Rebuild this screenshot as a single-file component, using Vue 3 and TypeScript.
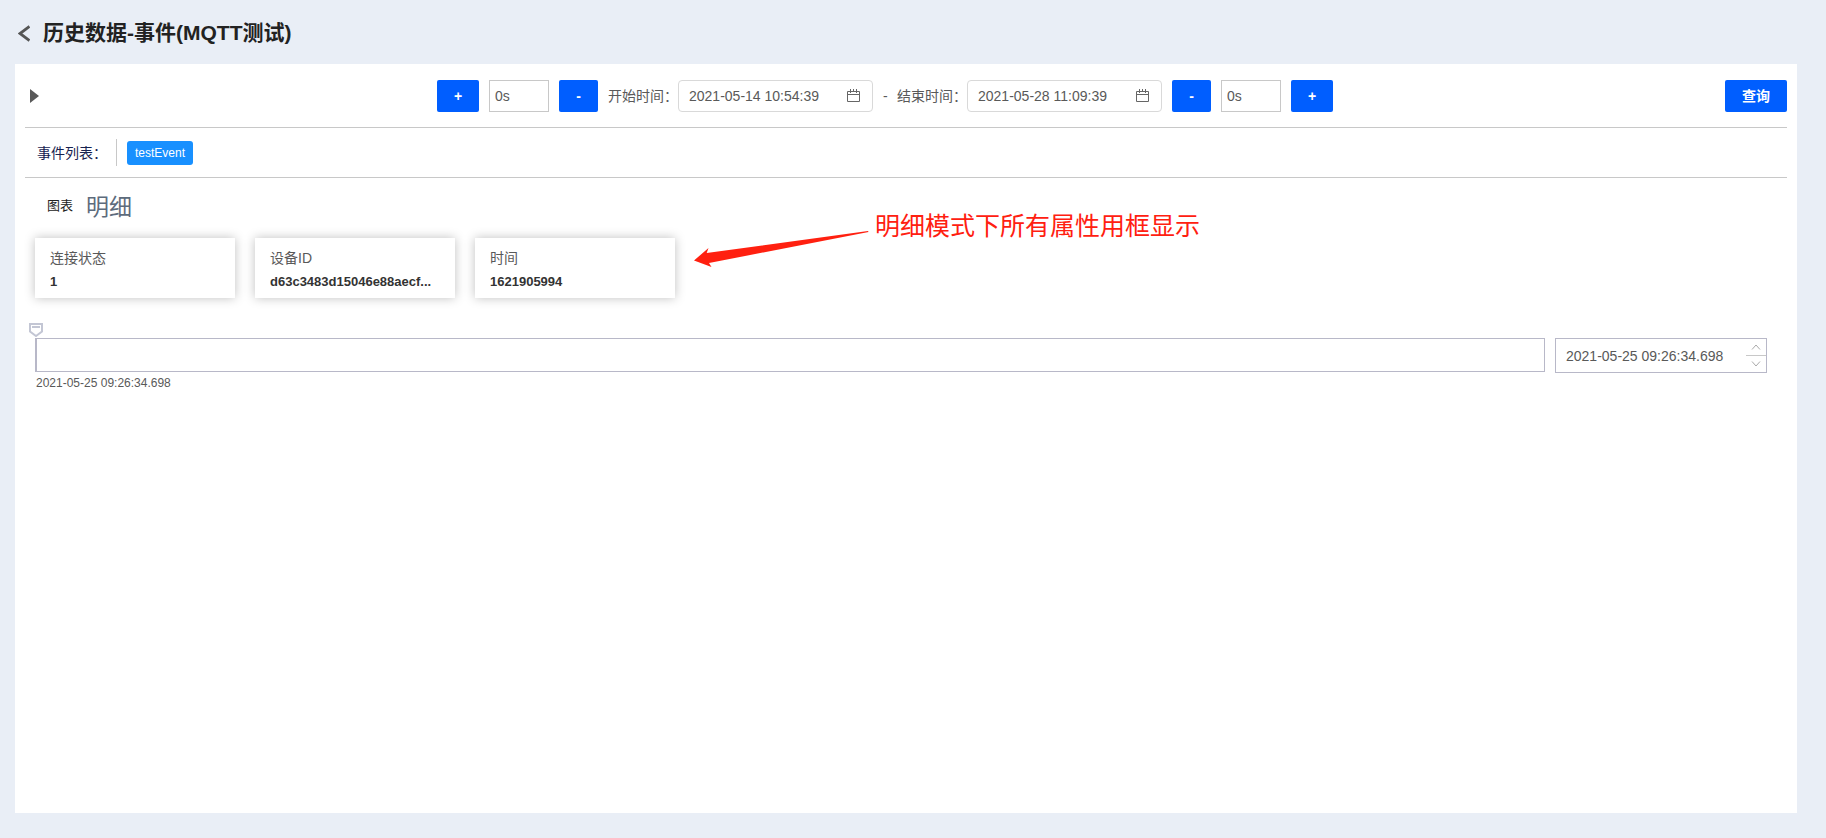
<script setup lang="ts">
import { ref } from 'vue'

interface Property {
  label: string
  value: string
}

const startOffset = ref('0s')
const endOffset = ref('0s')
const startTime = ref('2021-05-14 10:54:39')
const endTime = ref('2021-05-28 11:09:39')
const currentTime = ref('2021-05-25 09:26:34.698')
const events: string[] = ['testEvent']
const properties: Property[] = [
  { label: '连接状态', value: '1' },
  { label: '设备ID', value: 'd63c3483d15046e88aecf...' },
  { label: '时间', value: '1621905994' },
]
</script>

<template>
  <div class="page">
    <header class="header">
      <button class="back" type="button" aria-label="返回">
        <svg width="12" height="17" viewBox="0 0 12 17"><path d="M11.500 1.500 2 8.500 11.500 15.500" fill="none" stroke="#555" stroke-width="2.800" /></svg>
      </button>
      <h1>历史数据-事件(MQTT测试)</h1>
    </header>

    <main class="panel">
      <section class="toolbar">
        <button class="play" type="button" aria-label="播放">
          <svg width="9" height="14" viewBox="0 0 9 14"><path d="M0 0 9 7 0 14Z" fill="#595959" /></svg>
        </button>
        <div class="range">
          <button class="btn plus" type="button">+</button>
          <input v-model="startOffset" class="offset" aria-label="开始偏移" />
          <button class="btn minus" type="button">-</button>
          <div class="field">
            <label for="start">开始时间：</label>
            <div class="picker">
              <input id="start" v-model="startTime" />
              <svg width="14" height="14" viewBox="0 0 14 14"><path d="M.5 2.5h12v10H.5zM.5 5.5h12M3.5 0v4M6.5 0v3M9.500 0v4" fill="none" stroke="#666" /></svg>
            </div>
          </div>
          <span class="dash">-</span>
          <div class="field">
            <label for="end">结束时间：</label>
            <div class="picker">
              <input id="end" v-model="endTime" />
              <svg width="14" height="14" viewBox="0 0 14 14"><path d="M.5 2.5h12v10H.5zM.5 5.5h12M3.5 0v4M6.5 0v3M9.500 0v4" fill="none" stroke="#666" /></svg>
            </div>
          </div>
          <button class="btn minus" type="button">-</button>
          <input v-model="endOffset" class="offset" aria-label="结束偏移" />
          <button class="btn plus" type="button">+</button>
        </div>
        <button class="btn query" type="button">查询</button>
      </section>

      <section class="events">
        <span class="events-label">事件列表：</span>
        <div class="tags">
          <button v-for="name in events" :key="name" class="tag" type="button">{{ name }}</button>
        </div>
      </section>

      <section class="detail">
        <nav class="tabs">
          <button class="tab" type="button">图表</button>
          <button class="tab active" type="button">明细</button>
        </nav>
        <div class="cards">
          <article v-for="item in properties" :key="item.label" class="card">
            <div class="card-label">{{ item.label }}</div>
            <div class="card-value">{{ item.value }}</div>
          </article>
          <div class="note">
            <svg width="176" height="38" viewBox="0 0 176 38"><path d="M0 19.500 14.500 7 12.700 12 174 -10 174.500 -9 15 22 17.500 26Z" fill="#ff2010" /></svg>
            <span>明细模式下所有属性用框显示</span>
          </div>
        </div>
        <div class="timeline">
          <div class="track-wrap">
            <div class="track">
              <svg class="marker" width="14" height="14" viewBox="0 0 14 14"><path d="M1 1h12v7.500L7 13 1 8.500Z" fill="#fff" stroke="#c3c6d4" stroke-width="2" /><path d="M3 4h8" stroke="#c3c6d4" stroke-width="2" /></svg>
            </div>
            <div class="tick">{{ currentTime }}</div>
          </div>
          <div class="stepper">
            <input v-model="currentTime" aria-label="当前时间" />
            <div class="steps">
              <button type="button" aria-label="下一条"><svg width="10" height="6" viewBox="0 0 10 6"><path d="M1 5.5 5 1 9 5.5" fill="none" stroke="#aaa" /></svg></button>
              <button type="button" aria-label="上一条"><svg width="10" height="6" viewBox="0 0 10 6"><path d="M1 .5 5 5 9 .5" fill="none" stroke="#aaa" /></svg></button>
            </div>
          </div>
        </div>
      </section>
    </main>
  </div>
</template>

<style>
body {
  background: #e9eef6;
}
</style>

<style scoped>
* {
  box-sizing: border-box;
}
.page {
  display: flex;
  flex-direction: column;
  min-height: 100vh;
  padding: 0 29px 25px 15px;
  background: #e9eef6;
  color: #595959;
  font: 14px/22px "Liberation Sans", Arial, "Noto Sans CJK SC", sans-serif;
}
button,
input {
  margin: 0;
  padding: 0;
  border: 0;
  background: none;
  color: inherit;
  font: inherit;
}
button {
  cursor: pointer;
}
svg {
  display: block;
  flex: none;
}
.header {
  display: flex;
  align-items: center;
  gap: 13px;
  height: 64px;
  padding: 2px 0 0 3px;
}
h1 {
  margin: 0;
  color: #222;
  font-size: 21px;
  line-height: 32px;
}
.panel {
  flex: 1;
  padding: 0 10px;
  background: #fff;
}
.toolbar {
  display: flex;
  align-items: center;
  justify-content: space-between;
  height: 64px;
  border-bottom: 1px solid #c8c8c8;
}
.play {
  width: 20px;
  padding-left: 5px;
}
.range {
  display: flex;
  align-items: center;
  gap: 10px;
}
.btn {
  height: 32px;
  border-radius: 2px;
  background: #005eff;
  color: #fff;
  font-weight: 700;
}
.plus {
  width: 42px;
}
.minus {
  width: 39px;
}
.query {
  width: 62px;
}
.offset {
  width: 60px;
  height: 32px;
  padding: 0 5px;
  border: 1px solid #c8c8c8;
}
.field {
  display: flex;
  align-items: center;
}
.field label {
  width: 70px;
  white-space: nowrap;
}
.dash {
  width: 4px;
}
.picker {
  display: flex;
  align-items: center;
  width: 195px;
  height: 32px;
  padding: 0 11px 0 10px;
  border: 1px solid #d9d9d9;
  border-radius: 4px;
}
.picker input {
  flex: 1;
  min-width: 0;
}
.events {
  display: flex;
  align-items: center;
  height: 50px;
  padding-left: 12px;
  border-bottom: 1px solid #c8c8c8;
}
.events-label {
  width: 79px;
  color: #16224f;
  white-space: nowrap;
}
.tags {
  display: flex;
  align-items: center;
  height: 27px;
  padding-left: 10px;
  border-left: 1px solid #c8c8c8;
}
.tag {
  height: 24px;
  padding: 0 8px;
  border-radius: 3px;
  background: #1890ff;
  color: #fff;
  font-size: 12px;
}
.detail {
  padding: 8px 20px 0 10px;
}
.tabs {
  display: flex;
  align-items: center;
  gap: 13px;
  height: 40px;
  padding-left: 12px;
}
.tab {
  color: #222;
  font-size: 13px;
}
.tab.active {
  padding-top: 2px;
  color: #5d6b7c;
  font-size: 23px;
  line-height: 32px;
}
.cards {
  position: relative;
  display: flex;
  gap: 20px;
  margin-top: 12px;
}
.card {
  width: 200px;
  height: 60px;
  padding: 9px 15px;
  background: #fff;
  box-shadow: 0 0 10px rgba(0, 0, 0, 0.25);
}
.card-value {
  margin-top: 2px;
  overflow: hidden;
  color: #333;
  font-size: 13px;
  font-weight: 700;
  text-overflow: ellipsis;
  white-space: nowrap;
}
.note {
  position: absolute;
  top: -30px;
  left: 659px;
  display: flex;
  align-items: flex-start;
  gap: 5px;
  color: #ff2010;
  font-size: 25px;
  line-height: 36px;
  white-space: nowrap;
}
.note svg {
  margin-top: 33px;
  overflow: visible;
}
.timeline {
  display: flex;
  align-items: flex-start;
  gap: 10px;
  margin-top: 40px;
}
.track-wrap {
  flex: 1;
}
.track {
  position: relative;
  height: 34px;
  border: 1px solid #b8b8c8;
  border-left-width: 2px;
}
.marker {
  position: absolute;
  top: -16px;
  left: -8px;
}
.tick {
  padding-left: 1px;
  font-size: 12px;
}
.stepper {
  display: flex;
  width: 212px;
  height: 35px;
  border: 1px solid #b8b8c8;
}
.stepper input {
  flex: 1;
  min-width: 0;
  padding-left: 10px;
}
.steps {
  display: flex;
  flex-direction: column;
  width: 20px;
}
.steps button {
  display: flex;
  flex: 1;
  align-items: center;
  justify-content: center;
}
.steps button + button {
  border-top: 1px solid #c8c8c8;
}
</style>
